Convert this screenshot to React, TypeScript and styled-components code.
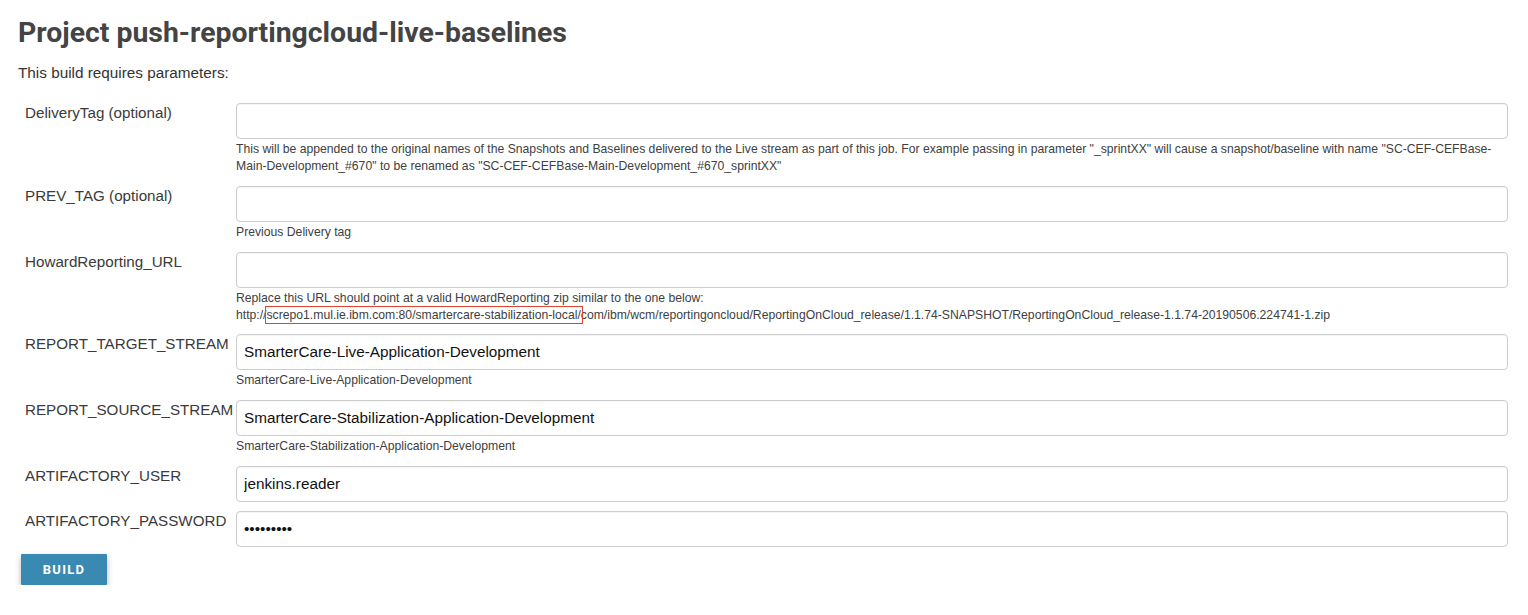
import React from "react";
import styled, { createGlobalStyle } from "styled-components";

const GlobalStyle = createGlobalStyle`
  html, body {
    margin: 0;
    padding: 0;
    background: #ffffff;
  }
  body {
    font-family: "Liberation Sans", Arial, Helvetica, sans-serif;
    color: #333333;
  }
`;

const Page = styled.div`
  padding: 0 20px 0 18px;
  display: flex;
  flex-direction: column;
`;

const Title = styled.h1`
  margin: 16px 0 0;
  font-family: Roboto, "Liberation Sans", Arial, sans-serif;
  font-weight: 700;
  font-size: 28.4px;
  line-height: 34px;
  color: #444444;
`;

const Intro = styled.p`
  margin: 14px 0 0;
  font-size: 15.3px;
  line-height: 18px;
  color: #333333;
`;

const Form = styled.form`
  margin-top: 21px;
  display: flex;
  flex-direction: column;
  gap: 7px;
`;

const Params = styled.div`
  display: flex;
  flex-direction: column;
  gap: 9px;
`;

const Row = styled.div`
  display: grid;
  grid-template-columns: 218px 1fr;
  align-items: start;
`;

const Label = styled.label`
  padding-left: 7px;
  font-size: 15.2px;
  line-height: 20px;
  color: #3a3a3a;
  white-space: nowrap;
`;

const Field = styled.div`
  display: flex;
  flex-direction: column;
  min-width: 0;
`;

const Input = styled.input`
  box-sizing: border-box;
  width: 100%;
  height: 36px;
  margin: 0;
  padding: 0 7px;
  border: 1px solid #cccccc;
  border-radius: 4px;
  background: #ffffff;
  box-shadow: inset 0 1px 1px rgba(0, 0, 0, 0.04);
  font-family: "Liberation Sans", Arial, Helvetica, sans-serif;
  font-size: 15.3px;
  color: #111111;
  outline: none;
`;

const Description = styled.div<{ $tight?: boolean }>`
  margin: 2px 0 ${(p) => (p.$tight ? "1px" : "2px")};
  font-size: 12.2px;
  line-height: 17px;
  color: #404040;
`;

const Marked = styled.span`
  outline: 1.5px solid #e2452f;
  outline-offset: 1px;
`;

const BuildButton = styled.button`
  align-self: flex-start;
  margin: 0 0 0 3px;
  width: 86px;
  height: 31px;
  border: none;
  border-radius: 1px;
  background: #3a89b2;
  color: #ffffff;
  font-family: Roboto, "Liberation Sans", Arial, sans-serif;
  font-weight: 700;
  font-size: 13px;
  letter-spacing: 1.3px;
  box-shadow: 0 3px 6px rgba(0, 0, 0, 0.28);
  cursor: pointer;
`;

type Param = {
  name: string;
  value?: string;
  password?: boolean;
  tight?: boolean;
  description?: React.ReactNode;
};

const params: Param[] = [
  {
    name: "DeliveryTag (optional)",
    description:
      'This will be appended to the original names of the Snapshots and Baselines delivered to the Live stream as part of this job. For example passing in parameter "_sprintXX" will cause a snapshot/baseline with name "SC-CEF-CEFBase-Main-Development_#670" to be renamed as "SC-CEF-CEFBase-Main-Development_#670_sprintXX"',
  },
  { name: "PREV_TAG (optional)", description: "Previous Delivery tag" },
  {
    name: "HowardReporting_URL",
    tight: true,
    description: (
      <>
        Replace this URL should point at a valid HowardReporting zip similar to the one below:
        <br />
        http://<Marked>screpo1.mul.ie.ibm.com:80/smartercare-stabilization-local/</Marked>
        com/ibm/wcm/reportingoncloud/ReportingOnCloud_release/1.1.74-SNAPSHOT/ReportingOnCloud_release-1.1.74-20190506.224741-1.zip
      </>
    ),
  },
  {
    name: "REPORT_TARGET_STREAM",
    value: "SmarterCare-Live-Application-Development",
    description: "SmarterCare-Live-Application-Development",
  },
  {
    name: "REPORT_SOURCE_STREAM",
    value: "SmarterCare-Stabilization-Application-Development",
    description: "SmarterCare-Stabilization-Application-Development",
  },
  { name: "ARTIFACTORY_USER", value: "jenkins.reader" },
  { name: "ARTIFACTORY_PASSWORD", value: "123456789", password: true },
];

export default function App() {
  return (
    <>
      <GlobalStyle />
      <Page>
        <Title>Project push-reportingcloud-live-baselines</Title>
        <Intro>This build requires parameters:</Intro>
        <Form onSubmit={(e) => e.preventDefault()}>
          <Params>
            {params.map((p) => (
              <Row key={p.name}>
                <Label>{p.name}</Label>
                <Field>
                  <Input
                    type={p.password ? "password" : "text"}
                    defaultValue={p.value ?? ""}
                    readOnly
                  />
                  {p.description && (
                    <Description $tight={p.tight}>{p.description}</Description>
                  )}
                </Field>
              </Row>
            ))}
          </Params>
          <BuildButton type="submit">BUILD</BuildButton>
        </Form>
      </Page>
    </>
  );
}
